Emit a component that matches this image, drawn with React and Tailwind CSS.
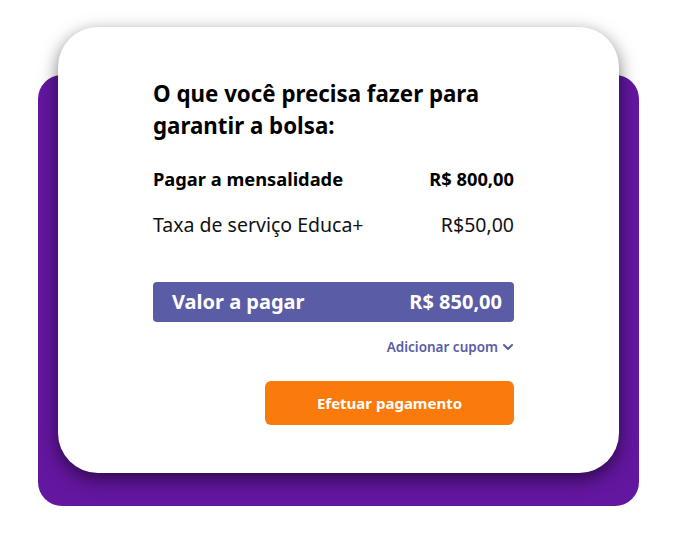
export default function App() {
  return (
    <div className="min-h-[536px] w-[674px] bg-white pt-[75px] pl-[38px] font-['Noto_Sans',sans-serif]">
      <div className="flex w-[601px] flex-col rounded-[24px] bg-[#63169f] px-[20px] pb-[33px]">
        <div className="-mt-[48px] h-[446px] rounded-[40px] bg-white pl-[95px] pr-[105px] pt-[51px] shadow-[0_6px_18px_rgba(0,0,0,0.55)]">
          <h2 className="text-[22.3px] font-bold leading-[32px] text-black">
            O que você precisa fazer para garantir a bolsa:
          </h2>
          <div className="mt-[25px] flex items-center justify-between text-[18.3px] font-bold leading-[24px] text-black">
            <span>Pagar a mensalidade</span>
            <span>R$ 800,00</span>
          </div>
          <div className="mt-[21px] flex items-center justify-between text-[19.5px] leading-[26px] text-[#111]">
            <span>Taxa de serviço Educa+</span>
            <span>R$50,00</span>
          </div>
          <div className="mt-[44px] flex h-[40px] items-center justify-between rounded-[4px] bg-[#5a5ca6] pl-[19px] pr-[12px] text-[20px] font-bold text-white">
            <span>Valor a pagar</span>
            <span>R$ 850,00</span>
          </div>
          <div className="mt-[15px] flex items-center justify-end gap-[4px] text-[13.5px] font-semibold text-[#5a5ca6]">
            <span>Adicionar cupom</span>
            <svg width="12" height="12" viewBox="0 0 24 24" fill="none" stroke="currentColor" strokeWidth="4" strokeLinecap="round" strokeLinejoin="round">
              <path d="M4 8l8 8 8-8" />
            </svg>
          </div>
          <div className="mt-[24px] flex justify-end">
            <button className="h-[44px] w-[249px] rounded-[6px] bg-[#fa7a0c] text-[15px] font-bold text-white">
              Efetuar pagamento
            </button>
          </div>
        </div>
      </div>
    </div>
  );
}
